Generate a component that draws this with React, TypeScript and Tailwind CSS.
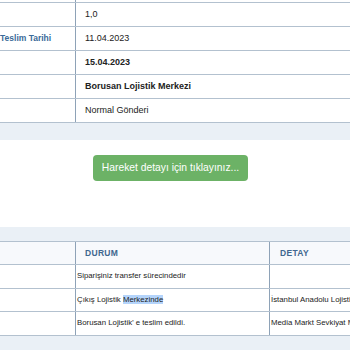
export default function App() {
  const info = [
    { label: '', value: '1,0', bold: false },
    { label: 'Teslim Tarihi', value: '11.04.2023', bold: false },
    { label: '', value: '15.04.2023', bold: true },
    { label: '', value: 'Borusan Lojistik Merkezi', bold: true },
    { label: '', value: 'Normal Gönderi', bold: false },
  ];

  const moves = [
    { status: 'Siparişiniz transfer sürecindedir', detail: '' },
    { status: 'Çıkış Lojistik\u00a0', mark: 'Merkezinde', detail: 'İstanbul Anadolu Lojistik Merkezi' },
    { status: 'Borusan Lojistik\u2019 e teslim edildi.', detail: 'Media Markt Sevkiyat Merkezi' },
  ];

  return (
    <div className="w-[350px] h-[350px] overflow-hidden bg-white text-[9px] text-[#222] font-['Liberation_Sans',Arial,sans-serif]">
      {/* top info table */}
      <div className="flex h-[3px] border-b border-[#b3c1cf]">
        <div className="w-[76px] border-r border-[#8ea2b7]" />
      </div>
      {info.map((row, i) => (
        <div key={i} className="flex h-[24px] border-b border-[#b3c1cf] last:h-[23px]">
          <div className="w-[76px] shrink-0 border-r border-[#8ea2b7] flex items-center overflow-hidden whitespace-nowrap">
            <span className="font-bold text-[8.5px] text-[#3a6a99]">{row.label}</span>
          </div>
          <div className={`flex items-center pl-[9px] whitespace-nowrap ${row.bold ? 'font-bold' : ''}`}>
            {row.value}
          </div>
        </div>
      ))}
      <div className="h-[17px] bg-[#eaf0f6]" />

      {/* button area */}
      <div className="h-[87px] pt-[15px]">
        <button className="ml-[93px] w-[155px] h-[26px] rounded-[4px] bg-[#6cb266] text-white text-[10.3px] flex items-center justify-center">
          Hareket detayı için tıklayınız...
        </button>
      </div>

      {/* movement table */}
      <div className="h-[15px] bg-[#eaf0f6] border-b border-[#b3c1cf]" />
      <div className="flex h-[23px] bg-[#f7f9fc] border-b border-[#b3c1cf] font-bold text-[8.5px] text-[#41678f] tracking-[0.3px]">
        <div className="w-[76px] shrink-0 border-r border-[#8ea2b7]" />
        <div className="w-[194px] shrink-0 border-r border-[#8ea2b7] flex items-center pl-[9px]">DURUM</div>
        <div className="flex items-center pl-[10px]">DETAY</div>
      </div>
      {moves.map((m, i) => (
        <div key={i} className="flex h-[23.5px] border-b border-[#b3c1cf] whitespace-nowrap text-[7.8px]">
          <div className="w-[76px] shrink-0 border-r border-[#8ea2b7]" />
          <div className="w-[194px] shrink-0 border-r border-[#8ea2b7] flex items-center pl-[1px] overflow-hidden">
            <span>
              {m.status}
              {m.mark && <span className="bg-[#b4d4fb]">{m.mark}</span>}
            </span>
          </div>
          <div className="flex items-center pl-[1px] overflow-hidden">{m.detail}</div>
        </div>
      ))}
      <div className="h-[20px] bg-[#eaf0f6]" />
    </div>
  );
}
